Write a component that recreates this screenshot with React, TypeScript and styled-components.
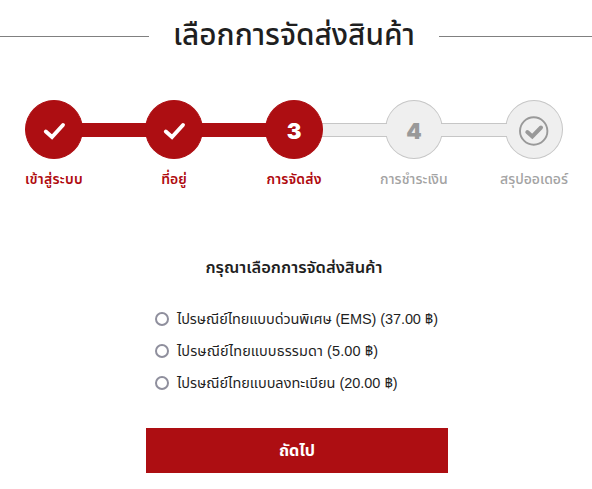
import React from 'react';
import styled, { createGlobalStyle } from 'styled-components';

const RED = '#ad0e12';

const GlobalStyle = createGlobalStyle`
  * { box-sizing: border-box; }
  body {
    margin: 0;
    background: #fff;
    color: #1f1f1f;
    font-family: "Liberation Sans", "Noto Sans Thai", sans-serif;
  }
`;

const Page = styled.main`
  width: 592px;
  height: 489px;
  overflow: hidden;
`;

const Header = styled.header`
  display: flex;
  align-items: center;
  height: 73px;
`;

const Rule = styled.span<{ $width: number }>`
  flex: 0 0 ${p => p.$width}px;
  height: 1px;
  background: #808080;
`;

const Title = styled.h1`
  flex: 1;
  margin: 0;
  padding-bottom: 1px;
  text-align: center;
  white-space: nowrap;
  font: 500 29.8px/40px "Noto Sans Thai", sans-serif;
`;

const Steps = styled.ol`
  display: flex;
  list-style: none;
  margin: 27px 0 0;
  padding: 0 0 0 25px;
`;

const Step = styled.li<{ $done: boolean }>`
  display: flex;
  flex-direction: column;
  align-items: center;
  flex: 0 0 58px;
  min-width: 0;
  z-index: ${p => (p.$done ? 3 : 1)};
`;

const Disc = styled.div<{ $done: boolean }>`
  display: flex;
  align-items: center;
  justify-content: center;
  flex: none;
  width: 58px;
  height: 59px;
  border-radius: 50%;
  border: 1px solid ${p => (p.$done ? RED : '#c6c6c6')};
  background: ${p => (p.$done ? RED : '#efefef')};
  color: ${p => (p.$done ? '#fff' : '#999')};
`;

const StepNumber = styled.span`
  padding-top: 3px;
  font: 900 22px/1 Inter, sans-serif;
`;

const Bar = styled.li<{ $done: boolean }>`
  flex: 0 0 66px;
  height: 14px;
  margin: 23px -2px 0;
  border: solid ${p => (p.$done ? RED : '#c6c6c6')};
  border-width: 1px 0;
  background: ${p => (p.$done ? RED : '#efefef')};
  z-index: 2;
`;

const StepLabel = styled.span<{ $done: boolean; $spacing: number }>`
  margin-top: 10px;
  white-space: nowrap;
  color: ${p => (p.$done ? '#b00b10' : '#a3a3a3')};
  font: ${p => (p.$done ? 600 : 500)} 14px/22px "Noto Sans Thai", sans-serif;
  letter-spacing: ${p => p.$spacing}px;
`;

const Form = styled.form`
  display: flex;
  flex-direction: column;
  width: 302px;
  margin: 63px 0 0 146px;
`;

const Prompt = styled.h2`
  align-self: center;
  margin: 0 6px 21px 0;
  white-space: nowrap;
  font: 600 16.5px/28px "Noto Sans Thai", sans-serif;
`;

const Option = styled.label<{ $spacing: number }>`
  display: flex;
  align-items: center;
  gap: 8px;
  height: 32px;
  padding-left: 9px;
  white-space: nowrap;
  font-size: 14.5px;
  letter-spacing: ${p => p.$spacing}px;
`;

const OptionText = styled.span`
  padding-top: 2px;
`;

const Radio = styled.input`
  appearance: none;
  flex: none;
  width: 14px;
  height: 14px;
  margin: 0;
  border: 2px solid #8f8f9d;
  border-radius: 50%;
  background: #fff;
  &:checked { border-width: 4px; border-color: ${RED}; }
`;

const Submit = styled.button`
  height: 45px;
  margin: 29px 0 0;
  padding: 0;
  border: 0;
  background: ${RED};
  color: #fff;
  font: 700 16.2px/44px "Noto Sans Thai", sans-serif;
`;

const DoneIcon = () => (
  <svg width="24" height="20" viewBox="0 0 24 20" fill="none">
    <path d="M3.8 11.5 10 17 21 5" stroke="#fff" strokeWidth="3.9" strokeLinecap="round" />
  </svg>
);

const SummaryIcon = () => (
  <svg width="32" height="32" viewBox="0 0 32 32" fill="none" stroke="#999">
    <circle cx="15.7" cy="17" r="13.7" strokeWidth="1.9" />
    <path d="m9.3 18 5 4.5 8.7-9" strokeWidth="4" strokeLinecap="round" />
  </svg>
);

const steps = [
  { label: 'เข้าสู่ระบบ', mark: <DoneIcon />, done: true, spacing: 0.25 },
  { label: 'ที่อยู่', mark: <DoneIcon />, done: true, spacing: 0 },
  { label: 'การจัดส่ง', mark: <StepNumber>3</StepNumber>, done: true, spacing: 0.15 },
  { label: 'การชำระเงิน', mark: <StepNumber>4</StepNumber>, done: false, spacing: 0.1 },
  { label: 'สรุปออเดอร์', mark: <SummaryIcon />, done: false, spacing: 0 },
];

const options = [
  { id: 'ems', label: 'ไปรษณีย์ไทยแบบด่วนพิเศษ (EMS) (37.00 ฿)', spacing: -0.08 },
  { id: 'regular', label: 'ไปรษณีย์ไทยแบบธรรมดา (5.00 ฿)', spacing: 0.09 },
  { id: 'registered', label: 'ไปรษณีย์ไทยแบบลงทะเบียน (20.00 ฿)', spacing: -0.02 },
];

export default function App() {
  return (
    <Page>
      <GlobalStyle />
      <Header>
        <Rule $width={149} />
        <Title>เลือกการจัดส่งสินค้า</Title>
        <Rule $width={153} />
      </Header>
      <Steps>
        {steps.map((s, i) => (
          <React.Fragment key={s.label}>
            {i > 0 && <Bar $done={s.done} />}
            <Step $done={s.done}>
              <Disc $done={s.done}>{s.mark}</Disc>
              <StepLabel $done={s.done} $spacing={s.spacing}>{s.label}</StepLabel>
            </Step>
          </React.Fragment>
        ))}
      </Steps>
      <Form>
        <Prompt>กรุณาเลือกการจัดส่งสินค้า</Prompt>
        {options.map(o => (
          <Option key={o.id} $spacing={o.spacing}>
            <Radio type="radio" name="shipping" value={o.id} />
            <OptionText>{o.label}</OptionText>
          </Option>
        ))}
        <Submit type="button">ถัดไป</Submit>
      </Form>
    </Page>
  );
}
